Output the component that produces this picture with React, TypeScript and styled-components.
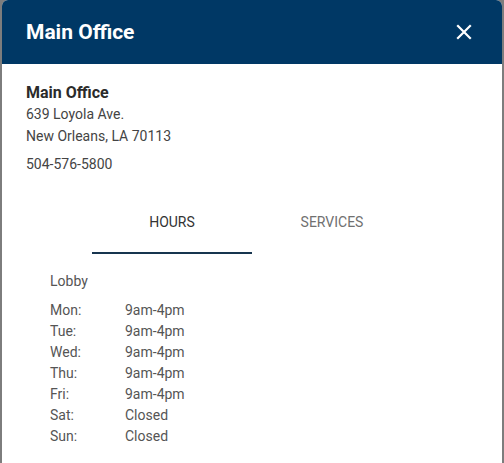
import React, { useState } from 'react';
import styled, { createGlobalStyle } from 'styled-components';

const GlobalStyle = createGlobalStyle`
  html, body {
    margin: 0;
    padding: 0;
    background: #7d7d7d;
    font-family: Roboto, "Liberation Sans", Arial, sans-serif;
  }
`;

const hours = [
  { day: 'Mon:', time: '9am-4pm' },
  { day: 'Tue:', time: '9am-4pm' },
  { day: 'Wed:', time: '9am-4pm' },
  { day: 'Thu:', time: '9am-4pm' },
  { day: 'Fri:', time: '9am-4pm' },
  { day: 'Sat:', time: 'Closed' },
  { day: 'Sun:', time: 'Closed' },
];

export default function App() {
  const [tab, setTab] = useState('hours');

  return (
    <>
      <GlobalStyle />
      <Modal>
        <Header>
          <Title>Main Office</Title>
          <CloseButton aria-label="Close">
            <svg width="16" height="16" viewBox="0 0 16 16">
              <path d="M2 2 L14 14 M14 2 L2 14" stroke="#fff" strokeWidth="2.2" strokeLinecap="square" />
            </svg>
          </CloseButton>
        </Header>
        <Body>
          <Address>
            <Name>Main Office</Name>
            <Line>639 Loyola Ave.</Line>
            <Line>New Orleans, LA 70113</Line>
            <Phone>504-576-5800</Phone>
          </Address>
          <Tabs>
            <Tab $active={tab === 'hours'} onClick={() => setTab('hours')}>Hours</Tab>
            <Tab $active={tab === 'services'} onClick={() => setTab('services')}>Services</Tab>
          </Tabs>
          <Panel>
            <Location>Lobby</Location>
            <HoursTable>
              {hours.map((h) => (
                <React.Fragment key={h.day}>
                  <Day>{h.day}</Day>
                  <Time>{h.time}</Time>
                </React.Fragment>
              ))}
            </HoursTable>
          </Panel>
        </Body>
      </Modal>
    </>
  );
}

const Modal = styled.div`
  margin: 0 2px;
  height: 463px;
  background: #fff;
  border-radius: 6px 6px 0 0;
  overflow: hidden;
`;

const Header = styled.div`
  height: 64px;
  background: #003865;
  display: flex;
  align-items: center;
  justify-content: space-between;
  padding: 0 26px 0 24px;
`;

const Title = styled.h1`
  margin: 0;
  color: #fff;
  font-size: 21px;
  font-weight: 700;
  line-height: 24px;
`;

const CloseButton = styled.button`
  width: 24px;
  height: 24px;
  padding: 0;
  border: none;
  background: transparent;
  display: flex;
  align-items: center;
  justify-content: center;
  cursor: pointer;
`;

const Body = styled.div`
  padding: 18px 0 0;
`;

const Address = styled.div`
  padding: 0 24px;
  color: #444;
  font-size: 14px;
  line-height: 21px;
`;

const Name = styled.div`
  font-size: 16px;
  font-weight: 700;
  color: #2b2b2b;
`;

const Line = styled.div`
  line-height: 22px;
`;

const Phone = styled.div`
  margin-top: 7px;
`;

const Tabs = styled.div`
  display: flex;
  justify-content: center;
  margin-top: 25px;
`;

const Tab = styled.button<{ $active: boolean }>`
  width: 160px;
  padding: 12px 0 20px;
  border: none;
  border-bottom: 2px solid ${(p) => (p.$active ? '#17354f' : 'transparent')};
  background: transparent;
  font-family: inherit;
  font-size: 14px;
  line-height: 20px;
  text-transform: uppercase;
  color: ${(p) => (p.$active ? '#333' : '#707070')};
  cursor: pointer;
`;

const Panel = styled.div`
  padding: 17px 48px 0;
  color: #555;
  font-size: 14px;
  line-height: 21px;
`;

const Location = styled.div`
  margin-bottom: 8px;
`;

const HoursTable = styled.div`
  display: grid;
  grid-template-columns: 75px auto;
  justify-content: start;
`;

const Day = styled.div``;

const Time = styled.div``;
